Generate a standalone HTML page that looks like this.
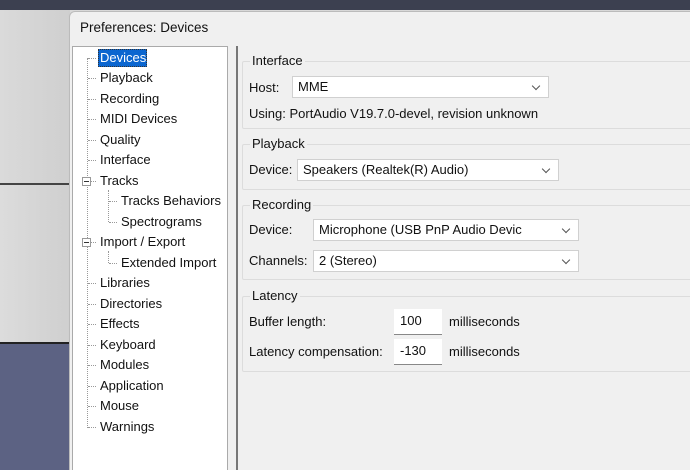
<!DOCTYPE html><html style="width:690px;height:470px;overflow:hidden"><head><style>
html,body{margin:0;width:690px;height:470px;overflow:hidden}
body{position:relative;font-family:"Liberation Sans",sans-serif;font-size:13px;color:#111;background:#d8d8d8}
.a{position:absolute}
.t{position:absolute;white-space:nowrap;line-height:16px}
.grp{position:absolute;left:242px;right:-4px;border:1px solid #dcdcdc;border-radius:2px;}
.combo{position:absolute;height:22px;background:#fff;border:1px solid #d0d0d0;box-sizing:border-box;padding-left:5px;line-height:20px}
.combo:after{content:"";position:absolute;right:9px;top:6px;width:5px;height:5px;border-right:1px solid #555;border-bottom:1px solid #555;transform:rotate(45deg)}
.edit{position:absolute;height:26px;width:48px;background:#fff;border-bottom:1px solid #888;box-sizing:border-box;padding-left:6px;line-height:24px}
.d{position:absolute;border-top:1px dotted #999;width:8px}
</style></head><body>
<div class="a" style="left:0;top:0;width:690px;height:10px;background:#3c4050"></div>
<div class="a" style="left:0;top:10px;width:70px;height:174px;background:linear-gradient(90deg,#dadada,#cfcfcf)"></div>
<div class="a" style="left:0;top:183px;width:70px;height:2px;background:#444"></div>
<div class="a" style="left:0;top:185px;width:70px;height:158px;background:linear-gradient(90deg,#dcdcdc,#cfcfcf)"></div>
<div class="a" style="left:0;top:342px;width:70px;height:2px;background:#222"></div>
<div class="a" style="left:0;top:344px;width:70px;height:126px;background:#5c6283"></div>
<div class="a" style="left:69px;top:11px;width:630px;height:459px;background:#f0f0f0;border:1px solid #bbb;border-bottom:none;border-radius:6px 0 0 0"></div>
<div class="t" style="left:80px;top:20px;font-size:13.5px">Preferences: Devices</div>
<div class="a" style="left:72px;top:46px;width:154px;height:430px;background:#fff;border:1px solid #aaa"></div>
<div class="a" style="left:87px;top:58px;height:370px;border-left:1px dotted #999"></div>
<div class="a" style="left:108px;top:190px;height:32px;border-left:1px dotted #999"></div>
<div class="a" style="left:108px;top:251px;height:12px;border-left:1px dotted #999"></div>
<div class="d" style="left:88px;top:58px"></div><div class="d" style="left:88px;top:78px"></div><div class="d" style="left:88px;top:99px"></div><div class="d" style="left:88px;top:119px"></div><div class="d" style="left:88px;top:140px"></div><div class="d" style="left:88px;top:160px"></div><div class="d" style="left:91px;top:181px;width:5px"></div><div class="d" style="left:109px;top:201px"></div><div class="d" style="left:109px;top:222px"></div><div class="d" style="left:91px;top:242px;width:5px"></div><div class="d" style="left:109px;top:263px"></div><div class="d" style="left:88px;top:283px"></div><div class="d" style="left:88px;top:304px"></div><div class="d" style="left:88px;top:324px"></div><div class="d" style="left:88px;top:345px"></div><div class="d" style="left:88px;top:365px"></div><div class="d" style="left:88px;top:386px"></div><div class="d" style="left:88px;top:406px"></div><div class="d" style="left:88px;top:427px"></div>
<div class="a" style="left:98px;top:49px;width:49px;height:18px;background:#0b66d0;border:1px dotted #333;box-sizing:border-box"></div>
<div class="a" style="left:82px;top:177px;width:9px;height:9px;border:1px solid #999;background:#fff;box-sizing:border-box"><div class="a" style="left:1px;top:3px;width:5px;height:1px;background:#333"></div></div>
<div class="a" style="left:82px;top:238px;width:9px;height:9px;border:1px solid #999;background:#fff;box-sizing:border-box"><div class="a" style="left:1px;top:3px;width:5px;height:1px;background:#333"></div></div>
<div class="t" style="left:100px;top:50px;color:#fff">Devices</div>
<div class="t" style="left:100px;top:70px">Playback</div>
<div class="t" style="left:100px;top:91px">Recording</div>
<div class="t" style="left:100px;top:111px">MIDI Devices</div>
<div class="t" style="left:100px;top:132px">Quality</div>
<div class="t" style="left:100px;top:152px">Interface</div>
<div class="t" style="left:100px;top:173px">Tracks</div>
<div class="t" style="left:121px;top:193px">Tracks Behaviors</div>
<div class="t" style="left:121px;top:214px">Spectrograms</div>
<div class="t" style="left:100px;top:234px">Import / Export</div>
<div class="t" style="left:121px;top:255px">Extended Import</div>
<div class="t" style="left:100px;top:275px">Libraries</div>
<div class="t" style="left:100px;top:296px">Directories</div>
<div class="t" style="left:100px;top:316px">Effects</div>
<div class="t" style="left:100px;top:337px">Keyboard</div>
<div class="t" style="left:100px;top:357px">Modules</div>
<div class="t" style="left:100px;top:378px">Application</div>
<div class="t" style="left:100px;top:398px">Mouse</div>
<div class="t" style="left:100px;top:419px">Warnings</div>
<div class="a" style="left:236px;top:46px;width:2px;height:430px;background:#777"></div>
<div class="grp" style="top:61px;height:66px"></div>
<div class="t" style="left:250px;top:53px;background:#f0f0f0;padding:0 2px">Interface</div>
<div class="t" style="left:249px;top:80px">Host:</div>
<div class="combo" style="left:292px;top:76px;width:257px">MME</div>
<div class="t" style="left:249px;top:106px">Using: PortAudio V19.7.0-devel, revision unknown</div>
<div class="grp" style="top:144px;height:44px"></div>
<div class="t" style="left:250px;top:136px;background:#f0f0f0;padding:0 2px">Playback</div>
<div class="t" style="left:249px;top:162px">Device:</div>
<div class="combo" style="left:297px;top:159px;width:262px">Speakers (Realtek(R) Audio)</div>
<div class="grp" style="top:205px;height:73px"></div>
<div class="t" style="left:250px;top:197px;background:#f0f0f0;padding:0 2px">Recording</div>
<div class="t" style="left:249px;top:222px">Device:</div>
<div class="combo" style="left:313px;top:219px;width:266px">Microphone (USB PnP Audio Devic</div>
<div class="t" style="left:249px;top:253px">Channels:</div>
<div class="combo" style="left:313px;top:250px;width:266px">2 (Stereo)</div>
<div class="grp" style="top:296px;height:74px"></div>
<div class="t" style="left:250px;top:288px;background:#f0f0f0;padding:0 2px">Latency</div>
<div class="t" style="left:249px;top:314px">Buffer length:</div>
<div class="edit" style="left:394px;top:309px">100</div>
<div class="t" style="left:449px;top:314px">milliseconds</div>
<div class="t" style="left:249px;top:344px">Latency compensation:</div>
<div class="edit" style="left:394px;top:339px">-130</div>
<div class="t" style="left:449px;top:344px">milliseconds</div>
</body></html>
